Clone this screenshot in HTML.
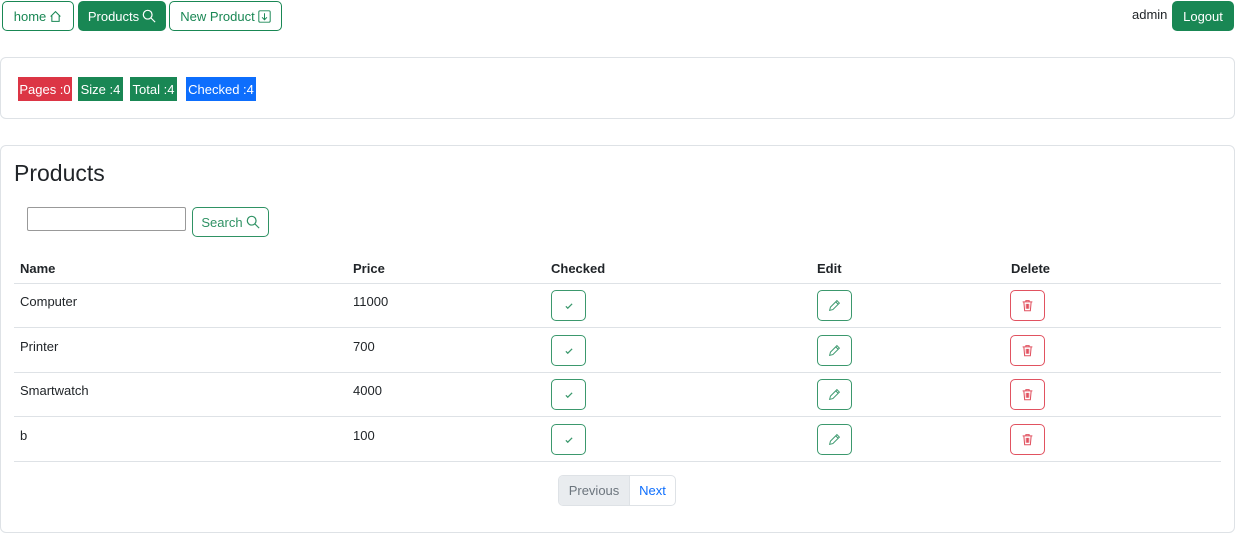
<!DOCTYPE html>
<html><head><meta charset="utf-8"><style>
*{box-sizing:border-box;margin:0;padding:0}
body{width:1235px;height:533px;background:#fff;font-family:"Liberation Sans",sans-serif;color:#212529;position:relative;overflow:hidden;font-size:13px}
.a{position:absolute}
.btn{position:absolute;border:1px solid #198754;border-radius:5px;color:#198754;display:flex;align-items:center;justify-content:center;font-size:13px;gap:3px;background:#fff}
.fill{background:#198754;color:#fff}
.card{position:absolute;border:1px solid #dee2e6;border-radius:6px}
.badge{position:absolute;top:77px;height:24px;color:#fff;font-size:13px;display:flex;align-items:center;justify-content:center}
.th{position:absolute;top:261px;font-weight:bold;font-size:13px}
.line{position:absolute;left:14px;width:1207px;height:1px;background:#dee2e6}
.td{position:absolute;font-size:13px}
.ib{position:absolute;width:35px;height:31px;border:1px solid #198754;border-radius:5px;display:flex;align-items:center;justify-content:center;opacity:.85}
.red{border-color:#dc3545}
</style></head><body>
<div class="btn" style="left:2px;top:1px;width:72px;height:30px">home <svg width="13" height="13" viewBox="0 0 16 16" fill="none" stroke="#198754" stroke-width="1.3"><path d="M2 8 8 2l6 6M3.5 7v7h9V7"/></svg></div>
<div class="btn fill" style="left:78px;top:1px;width:88px;height:30px">Products <svg width="14" height="14" viewBox="0 0 16 16" fill="none" stroke="#fff" stroke-width="1.4"><circle cx="6.5" cy="6.5" r="5"/><path d="M10 10l5 5"/></svg></div>
<div class="btn" style="left:169px;top:1px;width:113px;height:30px">New Product <svg width="13" height="13" viewBox="0 0 16 16" fill="none" stroke="#198754" stroke-width="1.2"><rect x="1" y="1" width="14" height="14" rx="1.5"/><path d="M8 4v8M5 9l3 3 3-3"/></svg></div>
<div class="a" style="left:1132px;top:7px;font-size:13px">admin</div>
<div class="btn fill" style="left:1172px;top:1px;width:62px;height:30px">Logout</div>

<div class="card" style="left:0;top:57px;width:1235px;height:62px"></div>
<div class="badge" style="left:18px;width:54px;background:#dc3545">Pages :0</div>
<div class="badge" style="left:78px;width:45px;background:#198754">Size :4</div>
<div class="badge" style="left:130px;width:47px;background:#198754">Total :4</div>
<div class="badge" style="left:186px;width:70px;background:#0d6efd">Checked :4</div>

<div class="card" style="left:0;top:145px;width:1235px;height:388px"></div>
<div class="a" style="left:14px;top:160px;font-size:23px">Products</div>
<div class="a" style="left:27px;top:207px;width:159px;height:24px;border:1px solid #999;border-radius:2px"></div>
<div class="btn" style="left:192px;top:207px;width:77px;height:30px;opacity:.9">Search <svg width="14" height="14" viewBox="0 0 16 16" fill="none" stroke="#198754" stroke-width="1.4"><circle cx="6.5" cy="6.5" r="5"/><path d="M10 10l5 5"/></svg></div>

<div class="th" style="left:20px">Name</div><div class="th" style="left:353px">Price</div><div class="th" style="left:551px">Checked</div><div class="th" style="left:817px">Edit</div><div class="th" style="left:1011px">Delete</div>
<div class="line" style="top:283px"></div><div class="line" style="top:327px"></div><div class="line" style="top:372px"></div><div class="line" style="top:416px"></div><div class="line" style="top:461px"></div>

<div class="td" style="left:20px;top:294px">Computer</div><div class="td" style="left:353px;top:294px">11000</div>
<div class="td" style="left:20px;top:339px">Printer</div><div class="td" style="left:353px;top:339px">700</div>
<div class="td" style="left:20px;top:383px">Smartwatch</div><div class="td" style="left:353px;top:383px">4000</div>
<div class="td" style="left:20px;top:428px">b</div><div class="td" style="left:353px;top:428px">100</div>

<!-- row buttons -->
<div id="rows"></div>
<script></script>
<div class="ib" style="left:551px;top:290px"><svg width="10" height="10" viewBox="0 0 16 16"><path d="M3 8.5l3 3 7-7" stroke="#198754" stroke-width="2" fill="none"/></svg></div>
<div class="ib" style="left:551px;top:335px"><svg width="10" height="10" viewBox="0 0 16 16"><path d="M3 8.5l3 3 7-7" stroke="#198754" stroke-width="2" fill="none"/></svg></div>
<div class="ib" style="left:551px;top:379px"><svg width="10" height="10" viewBox="0 0 16 16"><path d="M3 8.5l3 3 7-7" stroke="#198754" stroke-width="2" fill="none"/></svg></div>
<div class="ib" style="left:551px;top:424px"><svg width="10" height="10" viewBox="0 0 16 16"><path d="M3 8.5l3 3 7-7" stroke="#198754" stroke-width="2" fill="none"/></svg></div>

<div class="ib" style="left:817px;top:290px"><svg width="13" height="13" viewBox="0 0 16 16" fill="none" stroke="#198754" stroke-width="1.2"><path d="M11 2l3 3-8 8-4 1 1-4zM9.5 3.5l3 3"/></svg></div>
<div class="ib" style="left:817px;top:335px"><svg width="13" height="13" viewBox="0 0 16 16" fill="none" stroke="#198754" stroke-width="1.2"><path d="M11 2l3 3-8 8-4 1 1-4zM9.5 3.5l3 3"/></svg></div>
<div class="ib" style="left:817px;top:379px"><svg width="13" height="13" viewBox="0 0 16 16" fill="none" stroke="#198754" stroke-width="1.2"><path d="M11 2l3 3-8 8-4 1 1-4zM9.5 3.5l3 3"/></svg></div>
<div class="ib" style="left:817px;top:424px"><svg width="13" height="13" viewBox="0 0 16 16" fill="none" stroke="#198754" stroke-width="1.2"><path d="M11 2l3 3-8 8-4 1 1-4zM9.5 3.5l3 3"/></svg></div>

<div class="ib red" style="left:1010px;top:290px"><svg width="13" height="13" viewBox="0 0 16 16" fill="none" stroke="#dc3545" stroke-width="1.3"><path d="M2 3.5h12M6 3.5V2h4v1.5M3.5 3.5l1 11h7l1-11M6.5 6v6M9.5 6v6M8 6v6"/></svg></div>
<div class="ib red" style="left:1010px;top:335px"><svg width="13" height="13" viewBox="0 0 16 16" fill="none" stroke="#dc3545" stroke-width="1.3"><path d="M2 3.5h12M6 3.5V2h4v1.5M3.5 3.5l1 11h7l1-11M6.5 6v6M9.5 6v6M8 6v6"/></svg></div>
<div class="ib red" style="left:1010px;top:379px"><svg width="13" height="13" viewBox="0 0 16 16" fill="none" stroke="#dc3545" stroke-width="1.3"><path d="M2 3.5h12M6 3.5V2h4v1.5M3.5 3.5l1 11h7l1-11M6.5 6v6M9.5 6v6M8 6v6"/></svg></div>
<div class="ib red" style="left:1010px;top:424px"><svg width="13" height="13" viewBox="0 0 16 16" fill="none" stroke="#dc3545" stroke-width="1.3"><path d="M2 3.5h12M6 3.5V2h4v1.5M3.5 3.5l1 11h7l1-11M6.5 6v6M9.5 6v6M8 6v6"/></svg></div>

<div class="a" style="left:558px;top:475px;width:118px;height:31px;border:1px solid #dee2e6;border-radius:5px;overflow:hidden;display:flex">
<div style="width:70px;background:#e9ecef;color:#6c757d;display:flex;align-items:center;justify-content:center">Previous</div>
<div style="flex:1;color:#0d6efd;display:flex;align-items:center;justify-content:center;border-left:1px solid #dee2e6">Next</div>
</div>
</body></html>
